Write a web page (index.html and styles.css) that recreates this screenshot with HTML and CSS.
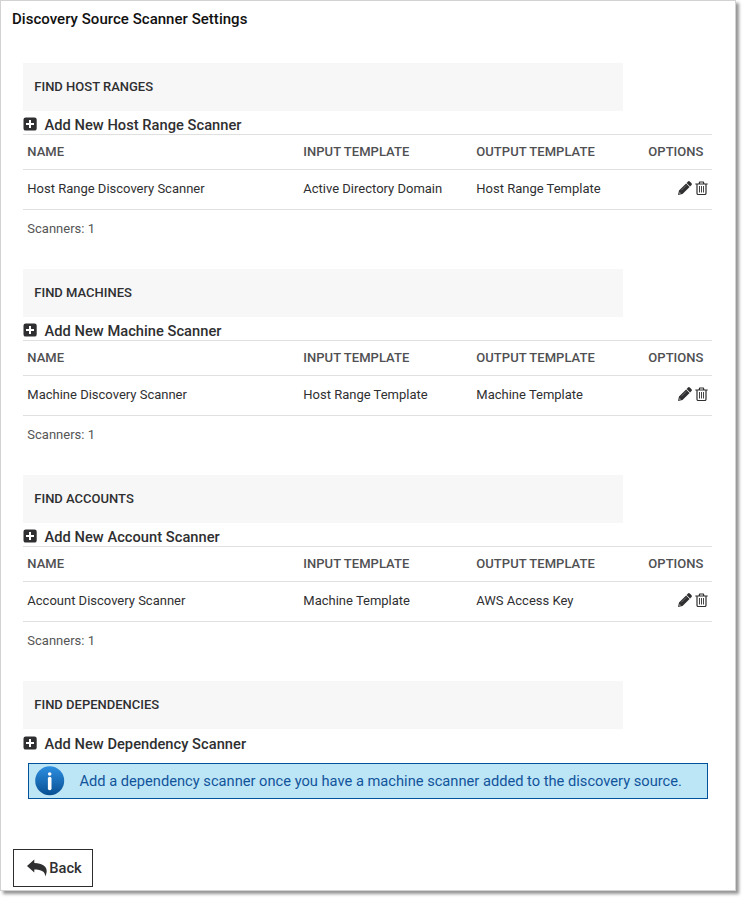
FILE: index.html
```html
<!DOCTYPE html>
<html lang="en">
<head>
<meta charset="utf-8">
<title>Discovery Source Scanner Settings</title>
<link rel="stylesheet" href="styles.css">
</head>
<body>
<svg width="0" height="0" class="defs">
  <symbol id="plus" viewBox="0 0 14 14"><path fill-rule="evenodd" d="M2.700 .4h8.800a2.200 2.200 0 0 1 2.200 2.200v8.800a2.200 2.200 0 0 1-2.200 2.200h-8.800a2.200 2.200 0 0 1-2.200-2.200v-8.800a2.200 2.200 0 0 1 2.200-2.200zM6 3v3H3v2h3v3h2V8h3V6H8V3z"/></symbol>
  <symbol id="pencil" viewBox="0 0 14 14"><path d="M10 .5a1.300 1.300 0 0 1 1.800 0l1.700 1.700a1.300 1.300 0 0 1 0 1.800l-1.400 1.400-3.500-3.500zM8.100 2.400L11.600 5.900l-7.100 7.100L0 14l1-4.500zM1.700 11.200l-.4 1.500 1.500-.4z" fill-rule="evenodd"/><path d="M3.300 9.300l5-5" stroke="#999" stroke-width=".6"/></symbol>
  <symbol id="trash" viewBox="0 0 13 14"><g fill="none" stroke="currentColor"><path d="M.3 3h12.400M4 3l.7-2h3.600L9 3M2 3v9.300q0 1.200 1.200 1.200h6.600q1.200 0 1.200-1.200V3" stroke-width="1.200"/><path d="M4.500 5v6.500M6.500 5v6.500M8.500 5v6.500" stroke-width=".9"/></g></symbol>
</svg>
<main class="panel">
  <h1>Discovery Source Scanner Settings</h1>
  <section>
    <h2>FIND HOST RANGES</h2>
    <a class="add"><svg><use href="#plus"/></svg>Add New Host Range Scanner</a>
    <div class="row head"><span>NAME</span><span>INPUT TEMPLATE</span><span>OUTPUT TEMPLATE</span><span>OPTIONS</span></div>
    <div class="row"><span>Host Range Discovery Scanner</span><span>Active Directory Domain</span><span>Host Range Template</span><span class="tools"><svg class="pencil"><use href="#pencil"/></svg><svg class="trash"><use href="#trash"/></svg></span></div>
    <p class="count">Scanners: 1</p>
  </section>
  <section>
    <h2>FIND MACHINES</h2>
    <a class="add"><svg><use href="#plus"/></svg>Add New Machine Scanner</a>
    <div class="row head"><span>NAME</span><span>INPUT TEMPLATE</span><span>OUTPUT TEMPLATE</span><span>OPTIONS</span></div>
    <div class="row"><span>Machine Discovery Scanner</span><span>Host Range Template</span><span>Machine Template</span><span class="tools"><svg class="pencil"><use href="#pencil"/></svg><svg class="trash"><use href="#trash"/></svg></span></div>
    <p class="count">Scanners: 1</p>
  </section>
  <section>
    <h2>FIND ACCOUNTS</h2>
    <a class="add"><svg><use href="#plus"/></svg>Add New Account Scanner</a>
    <div class="row head"><span>NAME</span><span>INPUT TEMPLATE</span><span>OUTPUT TEMPLATE</span><span>OPTIONS</span></div>
    <div class="row"><span>Account Discovery Scanner</span><span>Machine Template</span><span>AWS Access Key</span><span class="tools"><svg class="pencil"><use href="#pencil"/></svg><svg class="trash"><use href="#trash"/></svg></span></div>
    <p class="count">Scanners: 1</p>
  </section>
  <section class="last">
    <h2>FIND DEPENDENCIES</h2>
    <a class="add"><svg><use href="#plus"/></svg>Add New Dependency Scanner</a>
    <div class="info">
      <svg viewBox="0 0 30 30"><defs><linearGradient id="blue" x1="0" y1="0" x2="0" y2="1"><stop offset="0" stop-color="#2d8fe0"/><stop offset="1" stop-color="#084f93"/></linearGradient></defs><circle cx="14.700" cy="14.700" r="14.500" fill="url(#blue)"/><circle cx="14.700" cy="8" r="1.800" fill="#fff"/><path d="M14.700 12.500v10" stroke="#fff" stroke-width="3.600" stroke-linecap="round"/></svg>
      <span>Add a dependency scanner once you have a machine scanner added to the discovery source.</span>
    </div>
  </section>
  <button><svg viewBox="0 0 20 18"><path d="M0 7L7.300.5v3.500C15.500 4 20 7.600 19.700 12.500q-.2 2.700-1.500 5C18.200 12.500 14.500 10.500 7.300 10.500v3z"/></svg>Back</button>
</main>
</body>
</html>
```

FILE: styles.css
```css
* { box-sizing: border-box; }
html { height: 899px; overflow: hidden; }
body { margin: 0; height: 899px; background: #fff; font-family: Roboto, "Liberation Sans", sans-serif; color: #2f2f31; }
.defs { display: block; height: 0; }
.panel { width: 736px; height: 891px; padding: 0 12px 0 11px; border: 1px solid #d2d2d2; background: #fff; box-shadow: 3px 3px 3px rgba(0, 0, 0, .42); }
h1 { margin: 0; height: 62px; padding-top: 8px; font-size: 15px; line-height: 20px; font-weight: 500; letter-spacing: .03px; color: #111; }
section { height: 206px; margin: 0 11px; }
h2 { width: 600px; height: 48px; margin: 0; padding-left: 11.3px; background: #f7f7f7; font-size: 13px; line-height: 48px; font-weight: 500; }
.add { display: flex; align-items: center; height: 23px; padding-top: 5px; font-size: 14.67px; line-height: 18px; font-weight: 500; letter-spacing: .03px; }
.add svg { width: 14px; height: 14px; margin-right: 7.5px; margin-top: -2px; }
svg { flex: none; fill: currentColor; }
.row { display: grid; grid-template-columns: 276px 173px 172px 1fr; height: 40px; padding: 0 4px 2px 4.300px; align-items: center; font-size: 13px; line-height: 36px; border-bottom: 1px solid #e0e0e0; }
.head { height: 36px; padding-bottom: 0; line-height: 34px; border-top: 1px solid #e0e0e0; font-weight: 500; letter-spacing: .04px; color: #505052; }
.tools { display: flex; justify-content: flex-end; gap: 3px; padding-bottom: 1px; margin-right: -.4px; }
.pencil { width: 14px; height: 14px; }
.trash { width: 13px; height: 14px; }
.count { margin: 0; padding-left: 4.3px; font-size: 13px; line-height: 38px; color: #555; }
.last { height: 167px; }
.last .add { height: 24px; padding-top: 6px; }
.info { display: flex; align-items: center; height: 36px; margin: 10px 4px 0 5px; padding-left: 6px; background: #bce5f6; border: 1px solid #00539b; color: #12549b; font-size: 14.67px; white-space: nowrap; }
.info svg { width: 30px; height: 30px; margin-right: 14.500px; }
button { display: flex; align-items: center; width: 80px; height: 38px; margin: 1px 0 0 1px; padding: 0 0 0 13px; background: #fff; border: 1px solid #2d2d30; border-radius: 0; color: #2f2f31; font: 500 14.67px Roboto, sans-serif; }
button svg { width: 20px; height: 18px; margin-right: 2.300px; }
```
